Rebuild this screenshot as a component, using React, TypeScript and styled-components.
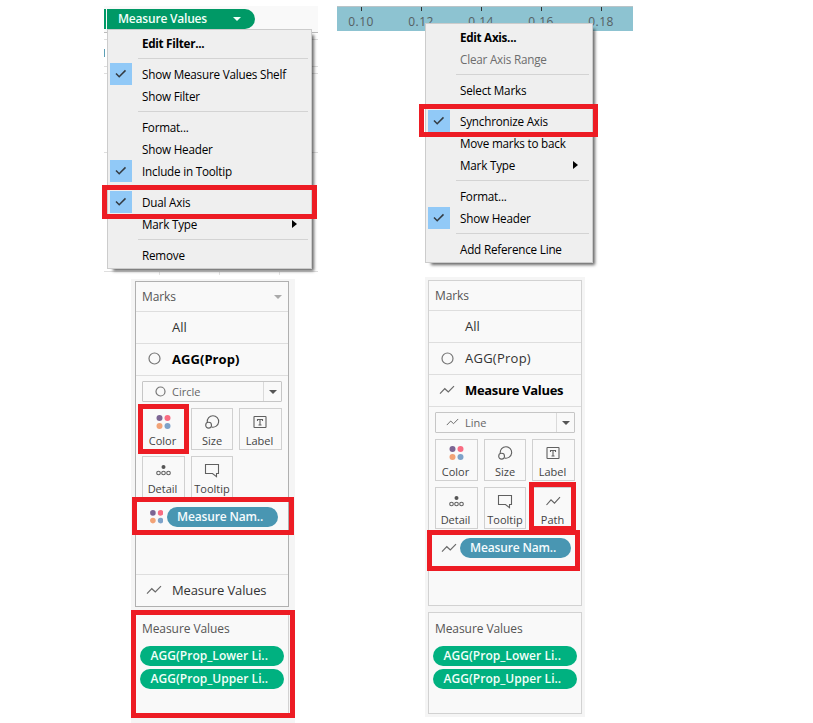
import React from "react";
import styled, { createGlobalStyle, css } from "styled-components";

const GlobalStyle = createGlobalStyle`
  * { box-sizing: border-box; }
  body { margin: 0; background: #fff; font-family: "Open Sans", "Noto Sans", sans-serif; }
`;

const Page = styled.main`
  position: relative;
  display: flex;
  gap: 19px;
  width: 813px;
  height: 723px;
  padding: 6px 0 0 104px;
  overflow: hidden;
  white-space: nowrap;
`;

const Column = styled.section<{ $width: number }>`
  display: flex;
  flex-direction: column;
  flex: none;
  width: ${(p) => p.$width}px;
`;

/* ---------- Shelf behind the filter menu ---------- */

const ShelfArea = styled.div`
  position: relative;
  height: 269px;
`;

const ShelfStrip = styled.div`
  display: flex;
  gap: 1px;
  height: 27px;
  padding-top: 3px;
  background: #f9f9f9;
  border-bottom: 1px solid #bbb;
`;

const PillEnd = styled.div`
  width: 2px;
  height: 20px;
  background: #009966;
`;

const ShelfPill = styled.div`
  display: flex;
  align-items: center;
  justify-content: space-between;
  width: 148px;
  height: 20px;
  padding: 0 14px 1px 11px;
  border-radius: 0 10px 10px 0;
  background: #009966;
  color: #f2fff9;
  font-size: 12px;
  font-weight: 600;
  letter-spacing: -0.2px;
`;

const ShelfRule = styled.div<{ $gap: number }>`
  height: 1px;
  margin-top: ${(p) => p.$gap}px;
  background: #dedede;
`;

const ShelfRow = styled.div`
  display: flex;
  align-items: center;
  height: 26px;
`;

const HiddenPillEdge = styled.div`
  width: 1px;
  height: 8px;
  background: #5c9fb5;
`;

const HeaderCells = styled.div`
  display: grid;
  grid-template-columns: 56px 60px 60px;
  height: 3px;
`;

const HeaderCell = styled.div`
  border-right: 1px solid #e4e4e4;
`;

/* ---------- Axis behind the axis menu ---------- */

const AxisArea = styled.div`
  position: relative;
  height: 264px;
`;

const AxisStrip = styled.div`
  display: grid;
  grid-template-columns: repeat(5, 60px);
  height: 25px;
  border-top: 1px solid #b9c4c8;
  background: #8dc3d1;
  overflow: hidden;
`;

const Tick = styled.div`
  display: flex;
  flex-direction: column;
  align-items: center;
  width: 48px;
  color: #555f63;
  font-size: 12px;
  line-height: 18px;
  letter-spacing: 0.4px;
  &::before {
    content: "";
    flex: none;
    width: 1px;
    height: 4px;
    margin-bottom: 2px;
    background: #333;
  }
`;

/* ---------- Context menus ---------- */

const Menu = styled.div<{ $left: number; $top: number; $width: number }>`
  position: absolute;
  left: ${(p) => p.$left}px;
  top: ${(p) => p.$top}px;
  width: ${(p) => p.$width}px;
  padding: 2px;
  border: 1px solid #ccc;
  background: #efefef;
  box-shadow: 4px 4px 3px -2px rgba(0, 0, 0, 0.6);
`;

const MenuRow = styled.div<{ $bold?: boolean; $muted?: boolean }>`
  display: flex;
  height: 22px;
  align-items: center;
  color: ${(p) => (p.$muted ? "#6d6d6d" : "#000")};
  font-size: 11.7px;
  font-weight: ${(p) => (p.$bold ? 700 : 400)};
  letter-spacing: ${(p) => (p.$bold ? "-0.3px" : "-0.21px")};
`;

const CheckCell = styled.div<{ $on?: boolean }>`
  display: flex;
  flex: none;
  align-items: center;
  justify-content: center;
  width: 22px;
  height: 22px;
  margin-right: 10px;
  background: ${(p) => (p.$on ? "#91c9f7" : "transparent")};
`;

const MenuText = styled.span`
  flex: 1;
  padding-bottom: 1px;
`;

const SubmenuArrow = styled.span`
  width: 0;
  height: 0;
  margin: 0 12px 1px 0;
  border: 4px solid transparent;
  border-left: 5px solid #000;
  border-right: 0;
`;

const MenuRule = styled.hr`
  height: 1px;
  margin: 4px 1px 4px 28px;
  border: 0;
  background: #d3d3d3;
`;

/* ---------- Marks cards ---------- */

const SidePane = styled.div<{ $top: number; $left: number; $width: number; $pad: string; $gap: number; $height: number }>`
  display: flex;
  flex-direction: column;
  gap: ${(p) => p.$gap}px;
  width: ${(p) => p.$width}px;
  height: ${(p) => p.$height}px;
  margin: ${(p) => p.$top}px 0 0 ${(p) => p.$left}px;
  padding: ${(p) => p.$pad};
  background: #f5f5f5;
`;

const Card = styled.div<{ $height: number; $strong?: boolean }>`
  display: flex;
  flex: none;
  flex-direction: column;
  width: 154px;
  height: ${(p) => p.$height}px;
  border: 1px solid ${(p) => (p.$strong ? "#b0b0b0" : "#d2d2d2")};
  background: #f9f9f9;
`;

const CardHeader = styled.div`
  display: flex;
  align-items: center;
  justify-content: space-between;
  height: 30px;
  padding: 0 6px;
  border-bottom: 1px solid #dedede;
  color: #555;
  font-size: 12px;
  letter-spacing: -0.1px;
`;

const Caret = styled.span<{ $color: string }>`
  width: 0;
  height: 0;
  border: 4px solid transparent;
  border-top-color: ${(p) => p.$color};
  border-bottom: 0;
`;

const LayerRow = styled.div<{ $bold?: boolean; $last?: boolean; $spacing?: number }>`
  display: flex;
  align-items: center;
  height: 32px;
  padding-bottom: ${(p) => (p.$bold ? 2 : 1)}px;
  color: ${(p) => (p.$bold ? "#000" : "#333")};
  font-size: 13px;
  font-weight: ${(p) => (p.$bold ? 700 : 400)};
  letter-spacing: ${(p) => p.$spacing ?? 0}px;
  ${(p) =>
    p.$last
      ? css`
          border-top: 1px solid #dedede;
        `
      : css`
          border-bottom: 1px solid #dedede;
        `}
`;

const LayerIcon = styled.span`
  display: flex;
  justify-content: center;
  width: 36px;
`;

const CardBody = styled.div`
  display: flex;
  flex: 1;
  flex-direction: column;
  gap: 6px;
  padding: 5px 6px;
`;

const MarkSelect = styled.div`
  display: flex;
  align-items: center;
  height: 21px;
  border: 1px solid #c6c6c6;
  border-radius: 1px;
  color: #666;
  font-size: 11px;
`;

const SelectIcon = styled.span`
  display: flex;
  justify-content: flex-end;
  width: 29px;
  padding-right: 6px;
`;

const SelectText = styled.span`
  flex: 1;
`;

const SelectToggle = styled.span`
  display: flex;
  align-items: center;
  justify-content: center;
  width: 18px;
  height: 19px;
  border-left: 1px solid #dadada;
`;

const ButtonGrid = styled.div`
  display: grid;
  grid-template-columns: 43px 42px 43px;
  grid-auto-rows: 42px;
  gap: 6px;
`;

const MarkButton = styled.div`
  display: flex;
  flex-direction: column;
  align-items: center;
  padding-top: 2px;
  border: 1px solid #d0d0d0;
  color: #444;
  font-size: 11px;
  line-height: 15px;
  &:not(:nth-child(3n + 2)) {
    padding-right: 2px;
  }
`;

const AssignedRow = styled.div`
  display: flex;
  align-items: center;
  height: 20px;
  margin-top: 3px;
`;

const AssignedIcon = styled.span<{ $inset: number }>`
  display: flex;
  justify-content: flex-end;
  width: 25px;
  padding-right: ${(p) => p.$inset}px;
`;

const BluePill = styled.div`
  display: flex;
  align-items: center;
  width: 111px;
  height: 20px;
  padding: 0 0 1px 10px;
  border-radius: 10px;
  background: #4996b2;
  color: #f5fbfd;
  font-size: 12px;
  font-weight: 600;
  letter-spacing: -0.15px;
`;

const ValuesTitle = styled.h2`
  margin: 0;
  padding: 7px 0 0 6px;
  height: 33px;
  color: #555;
  font-size: 12px;
  font-weight: 400;
  line-height: 18px;
  letter-spacing: -0.08px;
`;

const GreenPill = styled.div`
  display: flex;
  align-items: center;
  width: 144px;
  height: 20px;
  margin: 0 0 3px 4px;
  padding: 0 0 1px 10.5px;
  border-radius: 10px;
  background: #00b180;
  color: #f2fff9;
  font-size: 12px;
  font-weight: 600;
  letter-spacing: 0.03px;
`;

/* Red callout frame drawn over the interface. */
const Callout = styled.div<{ $x: number; $y: number; $w: number; $h: number }>`
  position: absolute;
  left: ${(p) => p.$x}px;
  top: ${(p) => p.$y}px;
  width: ${(p) => p.$w}px;
  height: ${(p) => p.$h}px;
  border: 5px solid #ed1c24;
`;

/* ---------- Icons ---------- */

const CheckIcon = () => (
  <svg width="12" height="10" viewBox="0 0 12 10" fill="none" stroke="#333b42" strokeWidth="1.5">
    <path d="M1 4.5 4.2 7.7 10.5 1.4" />
  </svg>
);

const CircleIcon = ({ r }: { r: number }) => (
  <svg width={r * 2 + 2} height={r * 2 + 2} fill="none" stroke="#777" strokeWidth="1.2">
    <circle cx={r + 1} cy={r + 1} r={r} />
  </svg>
);

const LineIcon = ({ width = 16 }: { width?: number }) => (
  <svg width={width} height={(width * 10) / 16} viewBox="0 0 16 10" fill="none" stroke="#6a6a6a" strokeWidth="1.2">
    <path d="M1 8.7 5.8 3.7 9.3 7 15 1.2" />
  </svg>
);

const DotsIcon = ({ size }: { size: number }) => (
  <svg width={size} height={size} viewBox="0 0 14 14">
    <circle cx="3" cy="3" r="2.9" fill="#7c6593" />
    <circle cx="11" cy="3" r="2.9" fill="#f96c82" />
    <circle cx="3" cy="11" r="2.9" fill="#f2a377" />
    <circle cx="11" cy="11" r="2.9" fill="#7da2c9" />
  </svg>
);

type IconName = "Color" | "Size" | "Label" | "Detail" | "Tooltip" | "Path";

const ButtonIcon = ({ name }: { name: IconName }) => (
  <svg width="22" height="22" viewBox="0 0 22 22" fill="none" stroke="#606060" strokeWidth="1.1">
    {name === "Color" && (
      <g stroke="none">
        <circle cx="7.5" cy="7" r="3" fill="#7c6593" />
        <circle cx="15.5" cy="7" r="3" fill="#f96c82" />
        <circle cx="7.5" cy="15" r="3" fill="#f2a377" />
        <circle cx="15.5" cy="15" r="3" fill="#7da2c9" />
      </g>
    )}
    {name === "Size" && (
      <>
        <path d="M6.3 11.2a5.7 5.7 0 1 1 4.3 4.8" />
        <circle cx="7.6" cy="14.2" r="2.9" />
      </>
    )}
    {name === "Label" && (
      <>
        <rect x="5" y="5.5" width="12" height="11" rx="0.5" />
        <path d="M8.5 10V8.5h5V10M11 8.5v5.5M9.5 14h3" />
      </>
    )}
    {name === "Detail" && (
      <>
        <circle cx="11.5" cy="8" r="2" fill="#555" stroke="none" />
        <circle cx="6.5" cy="14" r="1.8" />
        <circle cx="11.5" cy="14" r="1.8" />
        <circle cx="16.5" cy="14" r="1.8" />
      </>
    )}
    {name === "Tooltip" && <path d="M4.5 5.5h13v9h-2v3.2l-4-3.2h-7z" />}
    {name === "Path" && <path d="M4.5 15 9 9.8l3.5 3.4 5.5-6" />}
  </svg>
);

/* ---------- Composition ---------- */

type Entry = { text: string; checked?: boolean; bold?: boolean; muted?: boolean; more?: boolean } | null;

const filterMenu: Entry[] = [
  { text: "Edit Filter...", bold: true },
  null,
  { text: "Show Measure Values Shelf", checked: true },
  { text: "Show Filter" },
  null,
  { text: "Format..." },
  { text: "Show Header" },
  { text: "Include in Tooltip", checked: true },
  null,
  { text: "Dual Axis", checked: true },
  { text: "Mark Type", more: true },
  null,
  { text: "Remove" },
];

const axisMenu: Entry[] = [
  { text: "Edit Axis...", bold: true },
  { text: "Clear Axis Range", muted: true },
  null,
  { text: "Select Marks" },
  null,
  { text: "Synchronize Axis", checked: true },
  { text: "Move marks to back" },
  { text: "Mark Type", more: true },
  null,
  { text: "Format..." },
  { text: "Show Header", checked: true },
  null,
  { text: "Add Reference Line" },
];

const MenuEntries = ({ entries }: { entries: Entry[] }) => (
  <>
    {entries.map((e, i) =>
      e ? (
        <MenuRow key={i} $bold={e.bold} $muted={e.muted}>
          <CheckCell $on={e.checked}>{e.checked && <CheckIcon />}</CheckCell>
          <MenuText>{e.text}</MenuText>
          {e.more && <SubmenuArrow />}
        </MenuRow>
      ) : (
        <MenuRule key={i} />
      )
    )}
  </>
);

const MarksBody = ({ kind, buttons }: { kind: "Circle" | "Line"; buttons: IconName[] }) => (
  <CardBody>
    <MarkSelect>
      <SelectIcon>{kind === "Circle" ? <CircleIcon r={4.5} /> : <LineIcon width={13} />}</SelectIcon>
      <SelectText>{kind}</SelectText>
      <SelectToggle>
        <Caret $color="#555" />
      </SelectToggle>
    </MarkSelect>
    <ButtonGrid>
      {buttons.map((name) => (
        <MarkButton key={name}>
          <ButtonIcon name={name} />
          {name}
        </MarkButton>
      ))}
    </ButtonGrid>
    <AssignedRow>
      <AssignedIcon $inset={kind === "Circle" ? 4 : 3}>
        {kind === "Circle" ? <DotsIcon size={13.5} /> : <LineIcon />}
      </AssignedIcon>
      <BluePill>Measure Nam..</BluePill>
    </AssignedRow>
  </CardBody>
);

const MeasureValuesCard = () => (
  <Card $height={102}>
    <ValuesTitle>Measure Values</ValuesTitle>
    <GreenPill>AGG(Prop_Lower Li..</GreenPill>
    <GreenPill>AGG(Prop_Upper Li..</GreenPill>
  </Card>
);

const commonButtons: IconName[] = ["Color", "Size", "Label", "Detail", "Tooltip"];

export default function App() {
  return (
    <>
      <GlobalStyle />
      <Page>
        <Column $width={214}>
          <ShelfArea>
            <ShelfStrip>
              <PillEnd />
              <ShelfPill>
                Measure Values
                <Caret $color="#f2fff9" />
              </ShelfPill>
            </ShelfStrip>
            <ShelfRule $gap={6} />
            <ShelfRow>
              <HiddenPillEdge />
            </ShelfRow>
            <ShelfRule $gap={0} />
            <ShelfRule $gap={6} />
            <ShelfRule $gap={78} />
            <ShelfRule $gap={118} />
            <HeaderCells>
              <HeaderCell />
              <HeaderCell />
              <HeaderCell />
            </HeaderCells>
            <Menu $left={3} $top={23} $width={205}>
              <MenuEntries entries={filterMenu} />
            </Menu>
          </ShelfArea>
          <SidePane $top={4} $left={27} $width={164} $pad="2px 6px 0 4px" $gap={5} $height={444}>
            <Card $height={326} $strong>
              <CardHeader>
                Marks
                <Caret $color="#aaa" />
              </CardHeader>
              <LayerRow>
                <LayerIcon />
                All
              </LayerRow>
              <LayerRow $bold $spacing={0.05}>
                <LayerIcon>
                  <CircleIcon r={5.5} />
                </LayerIcon>
                AGG(Prop)
              </LayerRow>
              <MarksBody kind="Circle" buttons={commonButtons} />
              <LayerRow $last $spacing={-0.12}>
                <LayerIcon>
                  <LineIcon />
                </LayerIcon>
                Measure Values
              </LayerRow>
            </Card>
            <MeasureValuesCard />
          </SidePane>
        </Column>

        <Column $width={296}>
          <AxisArea>
            <AxisStrip>
              {["0.10", "0.12", "0.14", "0.16", "0.18"].map((v) => (
                <Tick key={v}>{v}</Tick>
              ))}
            </AxisStrip>
            <Menu $left={88} $top={17} $width={168}>
              <MenuEntries entries={axisMenu} />
            </Menu>
          </AxisArea>
          <SidePane $top={7} $left={88} $width={160} $pad="3px" $gap={6} $height={440}>
            <Card $height={326}>
              <CardHeader>Marks</CardHeader>
              <LayerRow>
                <LayerIcon />
                All
              </LayerRow>
              <LayerRow $spacing={0.25}>
                <LayerIcon>
                  <CircleIcon r={5.5} />
                </LayerIcon>
                AGG(Prop)
              </LayerRow>
              <LayerRow $bold $spacing={-0.32}>
                <LayerIcon>
                  <LineIcon />
                </LayerIcon>
                Measure Values
              </LayerRow>
              <MarksBody kind="Line" buttons={[...commonButtons, "Path"]} />
            </Card>
            <MeasureValuesCard />
          </SidePane>
        </Column>

        <Callout $x={102} $y={185} $w={215} $h={34} />
        <Callout $x={138} $y={404} $w={51} $h={50} />
        <Callout $x={132} $y={497} $w={162} $h={38} />
        <Callout $x={131} $y={610} $w={164} $h={108} />
        <Callout $x={419} $y={104} $w={179} $h={33} />
        <Callout $x={529} $y={482} $w={47} $h={49} />
        <Callout $x={427} $y={530} $w={153} $h={41} />
      </Page>
    </>
  );
}
